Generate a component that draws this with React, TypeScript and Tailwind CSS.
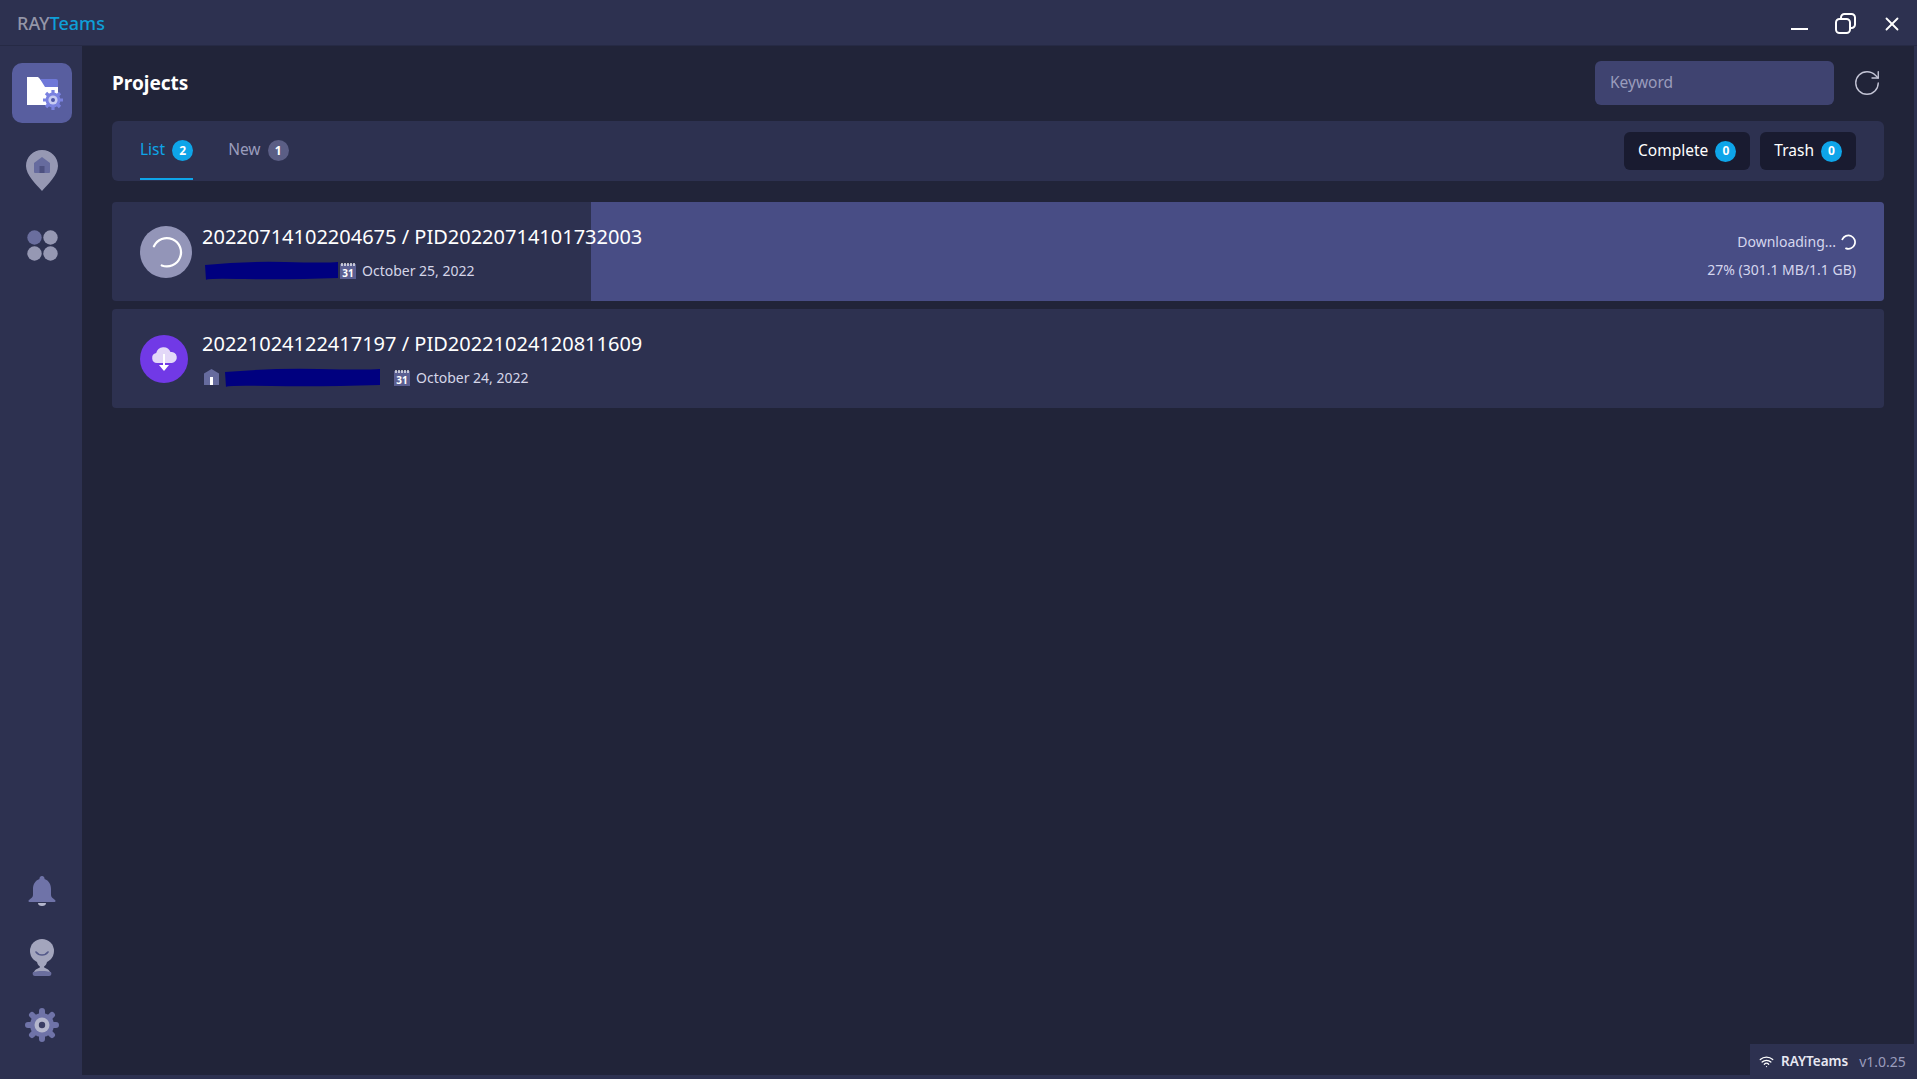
import React from 'react';
import { RotateCw, Wifi, X } from 'lucide-react';

const Badge = ({ value, muted }: { value: number; muted?: boolean }) => (
  <span className={`w-[21px] h-[21px] rounded-full flex items-center justify-center text-[12px] font-bold text-white ${muted ? 'bg-[#5b5e85]' : 'bg-[#0ea5e9]'}`}>
    {value}
  </span>
);

const FolderIcon = () => (
  <svg width="37" height="34" viewBox="0 0 37 34">
    <path d="M0 0h11l4 4h16v24H0z" fill="#fff" />
    <path d="M13 2h16a2 2 0 0 1 2 2v6H18z" fill="#6f78d8" />
    <circle cx="26" cy="23" r="7.500" fill="#7a82e0" />
    <g stroke="#7a82e0" strokeWidth="3.200">
      <path d="M26 13v20M16 23h20M19 16l14 14M33 16 19 30" />
    </g>
    <circle cx="26" cy="23" r="4.600" fill="#c7cbf2" />
    <circle cx="26" cy="23" r="2" fill="#4f57a8" />
  </svg>
);

const PinIcon = () => (
  <svg width="32" height="41" viewBox="0 0 32 41">
    <path d="M16 0C7 0 0 7 0 16c0 9 10 18 16 25 6-7 16-16 16-25C32 7 25 0 16 0z" fill="#9698b3" />
    <path d="M16 7l-8 6v9a1 1 0 0 0 1 1h14a1 1 0 0 0 1-1v-9z" fill="#666b9e" />
    <rect x="13.500" y="16" width="5" height="7" fill="#4d5180" />
  </svg>
);

const AppsIcon = () => (
  <svg width="31" height="31" viewBox="0 0 31 31">
    <circle cx="7.500" cy="7.500" r="7.200" fill="#6a6e9e" />
    <circle cx="23.500" cy="7.500" r="7.200" fill="#9698b3" />
    <circle cx="7.500" cy="23.500" r="7.200" fill="#9698b3" />
    <circle cx="23.500" cy="23.500" r="7.200" fill="#9698b3" />
  </svg>
);

const BellIcon = () => (
  <svg width="28" height="30" viewBox="0 0 28 30">
    <path d="M14 0a2.500 2.500 0 0 1 2.500 3C21 4.500 23 8.500 23 13v6c0 2 2 3.500 4 5 1 1 .5 2-1 2H2c-1.500 0-2-1-1-2 2-1.500 4-3 4-5v-6c0-4.500 2-8.500 6.500-10A2.500 2.500 0 0 1 14 0z" fill="#6f73a8" />
    <path d="M10 27h8a4 3 0 0 1-8 0z" fill="#b4b6cc" />
  </svg>
);

const AvatarIcon = () => (
  <svg width="26" height="38" viewBox="0 0 26 38">
    <circle cx="13" cy="12" r="12" fill="#a3a5bd" />
    <path d="M7 13c3 4 9 4 12 0" fill="none" stroke="#555a8a" strokeWidth="1.600" strokeLinecap="round" />
    <path d="M8 22h10c0 4-3 5-3 6 0 1 5 2 6 5H5c1-3 6-4 6-5 0-1-3-2-3-6z" fill="#a3a5bd" />
    <path d="M4 33c5-1.500 13-1.500 18 0 1 2 0 4-2 4H6c-2 0-3-2-2-4z" fill="#6a6e9e" />
  </svg>
);

const GearIcon = () => (
  <svg width="34" height="34" viewBox="0 0 34 34">
    <circle cx="17" cy="17" r="12" fill="#6f73a8" />
    <g stroke="#6f73a8" strokeWidth="6" strokeLinecap="round">
      <path d="M17 3v28M3 17h28M7 7l20 20M27 7 7 27" />
    </g>
    <circle cx="17" cy="17" r="7.500" fill="#b4b6cc" />
    <circle cx="17" cy="17" r="3.200" fill="#3a3d63" />
  </svg>
);

const RestoreIcon = () => (
  <svg width="21" height="21" viewBox="0 0 21 21" fill="none" stroke="#fff" strokeWidth="2">
    <rect x="1" y="6" width="14" height="14" rx="3.500" />
    <path d="M6 6V4.500A3.500 3.500 0 0 1 9.500 1h7A3.500 3.500 0 0 1 20 4.500v7a3.500 3.500 0 0 1-3.500 3.500H15" />
  </svg>
);

const CalendarIcon = () => (
  <svg width="16" height="17" viewBox="0 0 16 17" className="shrink-0 block">
    <rect x="0" y="2" width="16" height="15" fill="#5b5f92" />
    <path d="M2 1v3M5 1v3M8 1v3M11 1v3M14 1v3" stroke="#fff" strokeWidth="1.300" />
    <text x="8" y="14.500" textAnchor="middle" fontSize="10" fontWeight="700" fill="#fff" fontFamily="Noto Sans, sans-serif">31</text>
  </svg>
);

const HomeIcon = () => (
  <svg width="15" height="16" viewBox="0 0 15 16" className="shrink-0 block">
    <path d="M7.500 0 15 4.500V16H0V4.500z" fill="#666b9e" />
    <rect x="6" y="8" width="3" height="8" fill="#fff" />
  </svg>
);

const Spinner = ({ size, width }: { size: number; width: number }) => (
  <svg width={size} height={size} viewBox="0 0 24 24" fill="none" stroke="#fff" strokeWidth={width} strokeLinecap="round">
    <path d="M3.500 8A10 10 0 1 1 9 21.500" />
  </svg>
);

const CloudDownload = () => (
  <svg width="28" height="28" viewBox="0 0 28 28">
    <path d="M7 18a5 5 0 0 1-.800-9.900A7.500 7.500 0 0 1 20.500 7 5.500 5.500 0 0 1 22 18z" fill="#e3d8f8" />
    <path d="M14 9v13" stroke="#fff" strokeWidth="2" />
    <path d="M9 20h10l-5 6z" fill="#fff" />
  </svg>
);

const Scribble = ({ width }: { width: number }) => (
  <svg width={width} height="21" viewBox={`0 0 ${width} 21`} className="shrink-0 block">
    <path d={`M1 5 Q${width * 0.3} 1 ${width * 0.6} 2 T${width - 1} 2 L${width - 1} 18 Q${width * 0.6} 20 ${width * 0.3} 19 T2 20 Z`} fill="#00007f" />
  </svg>
);

const Project = ({ title, date, children, icon, fill, right }: { title: string; date: string; children: React.ReactNode; icon: React.ReactNode; fill?: string; right?: React.ReactNode }) => (
  <div className="relative h-[99px] bg-[#2d3150] rounded-[4px] flex items-center justify-between px-7 overflow-hidden">
    {fill && <div className={`absolute top-0 bottom-0 right-0 bg-[#484d85] ${fill}`} />}
    <div className="relative flex items-center">
      <div className="w-[62px] shrink-0">{icon}</div>
      <div className="flex flex-col">
        <div className="text-[20px] leading-[28px] text-white mt-[1px]">{title}</div>
        <div className="flex items-center mt-[8px] h-[22px] text-[14px] text-[#d5d6e8]">
          {children}
          <span className="ml-[6px]">{date}</span>
        </div>
      </div>
    </div>
    {right}
  </div>
);

export default function App() {
  return (
    <div className="h-screen w-full flex flex-col bg-[#2d3150] overflow-hidden relative text-white font-['Noto_Sans','Open_Sans',sans-serif]">
      {/* Title bar */}
      <div className="h-[46px] shrink-0 flex items-center justify-between pl-[17px] pr-[14px] border-b border-[#262a45]">
        <div className="text-[18px] font-medium mt-[1px]">
          <span className="text-[#9496a8]">RAY</span>
          <span className="text-[#0f9fd8]">Teams</span>
        </div>
        <div className="flex items-center mt-[2px]">
          <div className="w-[17px] h-[2px] bg-white mt-[10px] mr-[27px]" />
          <RestoreIcon />
          <X size={22} strokeWidth={2} className="ml-[25px]" />
        </div>
      </div>

      <div className="flex-1 flex min-h-0">
        {/* Sidebar */}
        <aside className="w-[82px] shrink-0 flex flex-col items-center pl-[2px] pt-[17px] pb-[37px]">
          <div className="w-[60px] h-[60px] rounded-[10px] bg-[#585e9f] pl-[15px] pt-[14px]">
            <FolderIcon />
          </div>
          <div className="mt-[27px]"><PinIcon /></div>
          <div className="mt-[39px]"><AppsIcon /></div>
          <div className="mt-auto"><BellIcon /></div>
          <div className="mt-[33px]"><AvatarIcon /></div>
          <div className="mt-[31px]"><GearIcon /></div>
        </aside>

        {/* Main */}
        <main className="flex-1 min-w-0 bg-[#212439] mr-[3px] mb-[4px] pl-[30px] pr-[30px]">
          <div className="h-[75px] flex items-center justify-between">
            <h1 className="text-[19px] font-bold">Projects</h1>
            <div className="flex items-center gap-[18px] mr-[2px] -mt-[1px]">
              <div className="w-[239px] h-[44px] rounded-[6px] bg-[#3f4370] flex items-center px-[15px] text-[15.5px] text-[#9a9cbc]">
                <span className="-mt-[1px]">Keyword</span>
              </div>
              <RotateCw size={30} strokeWidth={1.1} className="text-[#c4c5d6]" />
            </div>
          </div>

          <div className="h-[60px] rounded-[6px] bg-[#2d3150] flex items-center justify-between px-7">
            <div className="flex items-center gap-[35px] h-full">
              <div className="relative h-full flex items-center gap-[7px] text-[15.5px] text-[#0ea5e9]">
                <span className="-mt-[2px]">List</span>
                <span className="-mt-[1px]"><Badge value={2} /></span>
                <div className="absolute left-0 right-0 bottom-[1px] h-[2px] bg-[#0ea5e9]" />
              </div>
              <div className="flex items-center gap-[7px] text-[15.5px] text-[#9a9cbc]">
                <span className="-mt-[2px]">New</span>
                <span className="-mt-[1px]"><Badge value={1} muted /></span>
              </div>
            </div>
            <div className="flex items-center gap-[10px]">
              <div className="h-[38px] px-[14px] rounded-[6px] bg-[#191b30] flex items-center gap-[7px] text-[15.5px]">
                <span className="-mt-[1px]">Complete</span> <Badge value={0} />
              </div>
              <div className="h-[38px] px-[14px] rounded-[6px] bg-[#191b30] flex items-center gap-[7px] text-[15.5px]">
                <span className="-mt-[1px]">Trash</span> <Badge value={0} />
              </div>
            </div>
          </div>

          <div className="mt-[21px] flex flex-col gap-[8px]">
            <Project
              title="20220714102204675 / PID20220714101732003"
              date="October 25, 2022"
              fill="left-[479px]"
              icon={
                <div className="w-[52px] h-[52px] rounded-full bg-[#9395b8] flex items-center justify-center">
                  <Spinner size={34} width={1.6} />
                </div>
              }
              right={
                <div className="relative flex flex-col items-end text-[14px] text-[#d5d6ee] mt-[8px]">
                  <div className="flex items-center gap-[4px] h-[20px]">
                    Downloading... <Spinner size={16} width={2.6} />
                  </div>
                  <div className="mt-[8px] leading-[20px]">27% (301.1 MB/1.1 GB)</div>
                </div>
              }
            >
              <span className="ml-[2px]"><Scribble width={135} /></span>
              <span className="ml-[1px]"><CalendarIcon /></span>
            </Project>
            <Project
              title="20221024122417197 / PID20221024120811609"
              date="October 24, 2022"
              icon={
                <div className="w-[48px] h-[48px] rounded-full bg-[#7139e6] flex items-center justify-center">
                  <CloudDownload />
                </div>
              }
            >
              <span className="ml-[2px]"><HomeIcon /></span>
              <span className="ml-[5px]"><Scribble width={157} /></span>
              <span className="ml-[13px]"><CalendarIcon /></span>
            </Project>
          </div>
        </main>
      </div>

      {/* Status bar */}
      <div className="absolute right-0 bottom-0 h-[35px] w-[167px] bg-[#2d3150] flex items-center pl-[9px] text-[14px]">
        <Wifi size={15} className="text-white" />
        <span className="ml-[7px] text-[13.5px] font-semibold text-[#e8e8f2]">RAYTeams</span>
        <span className="ml-[11px] text-[#9a9cbc]">v1.0.25</span>
      </div>
    </div>
  );
}
